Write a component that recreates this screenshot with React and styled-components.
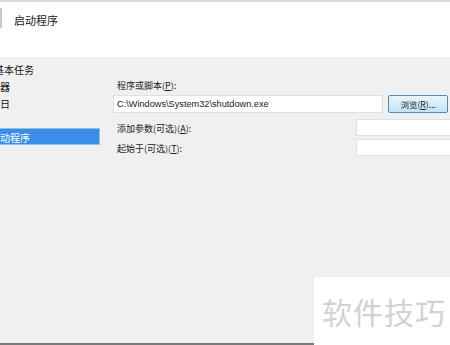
import React from 'react';
import styled, { createGlobalStyle } from 'styled-components';

const GlobalStyle = createGlobalStyle`
  html, body {
    margin: 0;
    padding: 0;
    background: #f0f0f0;
  }
  body {
    font-family: "Noto Sans CJK SC", "Liberation Sans", sans-serif;
    color: #1a1a1a;
  }
`;

const Page = styled.div`
  position: relative;
  width: 450px;
  height: 345px;
  overflow: hidden;
  display: flex;
  flex-direction: column;
  background: #f0f0f0;
`;

const TopLine = styled.div`
  height: 2px;
  background: #d3dbe6;
`;

const Header = styled.div`
  height: 55px;
  background: #fff;
  display: flex;
  align-items: flex-start;
  gap: 12px;
`;

const IconEdge = styled.div`
  width: 2px;
  height: 20px;
  margin-top: 6px;
  background: #c8c8c8;
`;

const Title = styled.div`
  font-size: 11px;
  line-height: 14px;
  margin-top: 11px;
  color: #202020;
`;

const Body = styled.div`
  flex: 1;
  display: flex;
  border-bottom: 2px solid #7a7a7a;
`;

const Sidebar = styled.div`
  width: 113px;
  flex-shrink: 0;
  padding-top: 3px;
  display: flex;
  flex-direction: column;
`;

const NavItem = styled.div`
  width: 100px;
  height: 17px;
  line-height: 17px;
  font-size: 10px;
  white-space: nowrap;
  overflow: hidden;
  box-sizing: border-box;
  text-indent: ${({ $indent }) => $indent}px;
  color: ${({ $active }) => ($active ? '#fff' : '#111')};
  background: ${({ $active }) => ($active ? '#3b8ee8' : 'transparent')};
  border: 1px solid ${({ $active }) => ($active ? '#8fc0f0' : 'transparent')};
  border-left: none;
`;

const Content = styled.div`
  flex: 1;
  min-width: 0;
  padding-top: 22px;
  display: flex;
  flex-direction: column;
`;

const Label = styled.div`
  font-size: 9px;
  line-height: 14px;
  padding-left: 4px;
  padding-top: ${({ $top }) => $top || 0}px;
  white-space: nowrap;
  color: #1a1a1a;

  u {
    text-decoration: underline;
  }
`;

const PathRow = styled.div`
  display: flex;
  gap: 5px;
  margin-top: 2px;
`;

const TextBox = styled.div`
  box-sizing: border-box;
  flex-shrink: 0;
  width: ${({ $width }) => $width}px;
  height: ${({ $height }) => $height || 18}px;
  background: #fff;
  border: 1px solid #e0e0e0;
  font-family: "Liberation Sans", sans-serif;
  font-size: 9.2px;
  line-height: 16px;
  padding-left: 3px;
  white-space: nowrap;
  overflow: hidden;
`;

const Button = styled.div`
  box-sizing: border-box;
  flex-shrink: 0;
  width: 60px;
  height: 18px;
  border: 1px solid #4f8ab8;
  border-radius: 2px;
  background: linear-gradient(#e9f5fc, #c4e2f5);
  font-size: 8.5px;
  line-height: 16px;
  text-align: center;
  color: #222;
  white-space: nowrap;
`;

const OptionGrid = styled.div`
  display: grid;
  grid-template-columns: 243px 100px;
  row-gap: 3px;
  margin-top: 6px;
`;

const Watermark = styled.div`
  position: absolute;
  left: 314px;
  top: 277px;
  right: 0;
  bottom: 0;
  background: #fff;
  display: flex;
  align-items: center;
  justify-content: center;
  font-size: 30px;
  letter-spacing: 1px;
  color: #d2d2d2;
  padding-left: 4px;
`;

const navItems = [
  { text: '创建基本任务', indent: -26 },
  { text: '触发器', indent: -20 },
  { text: '每日', indent: -10 },
  { text: '操作', indent: -20 },
  { text: '启动程序', indent: -10, active: true },
];

export default function App() {
  return (
    <>
      <GlobalStyle />
      <Page>
        <TopLine />
        <Header>
          <IconEdge />
          <Title>启动程序</Title>
        </Header>
        <Body>
          <Sidebar>
            {navItems.map((item) => (
              <NavItem key={item.text} $indent={item.indent} $active={item.active}>
                {item.text}
              </NavItem>
            ))}
          </Sidebar>
          <Content>
            <Label>程序或脚本(<u>P</u>):</Label>
            <PathRow>
              <TextBox $width={270}>C:\Windows\System32\shutdown.exe</TextBox>
              <Button>浏览(<u>R</u>)...</Button>
            </PathRow>
            <OptionGrid>
              <Label $top={3}>添加参数(可选)(<u>A</u>):</Label>
              <TextBox $width={100} $height={17} />
              <Label $top={3}>起始于(可选)(<u>T</u>):</Label>
              <TextBox $width={100} $height={17} />
            </OptionGrid>
          </Content>
        </Body>
        <Watermark>软件技巧</Watermark>
      </Page>
    </>
  );
}
